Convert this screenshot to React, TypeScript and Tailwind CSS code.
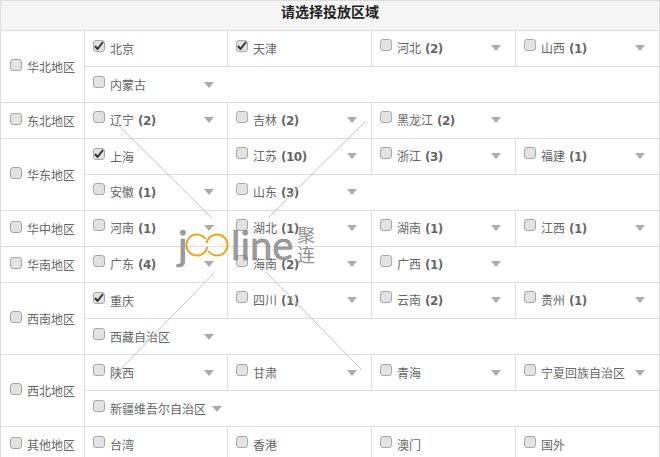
const regions: { name: string; rows: { name: string; count?: number; checked?: boolean; arrow?: boolean }[][] }[] = [
  {
    name: "华北地区",
    rows: [
      [{ name: "北京", checked: true }, { name: "天津", checked: true }, { name: "河北", count: 2, arrow: true }, { name: "山西", count: 1, arrow: true }],
      [{ name: "内蒙古", arrow: true }],
    ],
  },
  {
    name: "东北地区",
    rows: [[{ name: "辽宁", count: 2, arrow: true }, { name: "吉林", count: 2, arrow: true }, { name: "黑龙江", count: 2, arrow: true }]],
  },
  {
    name: "华东地区",
    rows: [
      [{ name: "上海", checked: true }, { name: "江苏", count: 10, arrow: true }, { name: "浙江", count: 3, arrow: true }, { name: "福建", count: 1, arrow: true }],
      [{ name: "安徽", count: 1, arrow: true }, { name: "山东", count: 3, arrow: true }],
    ],
  },
  {
    name: "华中地区",
    rows: [[{ name: "河南", count: 1, arrow: true }, { name: "湖北", count: 1, arrow: true }, { name: "湖南", count: 1, arrow: true }, { name: "江西", count: 1, arrow: true }]],
  },
  {
    name: "华南地区",
    rows: [[{ name: "广东", count: 4, arrow: true }, { name: "海南", count: 2, arrow: true }, { name: "广西", count: 1, arrow: true }]],
  },
  {
    name: "西南地区",
    rows: [
      [{ name: "重庆", checked: true }, { name: "四川", count: 1, arrow: true }, { name: "云南", count: 2, arrow: true }, { name: "贵州", count: 1, arrow: true }],
      [{ name: "西藏自治区", arrow: true }],
    ],
  },
  {
    name: "西北地区",
    rows: [
      [{ name: "陕西", arrow: true }, { name: "甘肃", arrow: true }, { name: "青海", arrow: true }, { name: "宁夏回族自治区", arrow: true }],
      [{ name: "新疆维吾尔自治区", arrow: true }],
    ],
  },
  {
    name: "其他地区",
    rows: [[{ name: "台湾" }, { name: "香港" }, { name: "澳门" }, { name: "国外" }]],
  },
];

function Check({ checked }: { checked?: boolean }) {
  return (
    <span className="flex h-[12px] w-[12px] shrink-0 items-center justify-center rounded-[3px] border border-[#a8a8a8] bg-[#e2e2e2]">
      {checked && (
        <svg width="10" height="9" viewBox="0 0 10 9">
          <path d="M1 5 L3.5 8 L9 1" fill="none" stroke="#333" strokeWidth="2" />
        </svg>
      )}
    </span>
  );
}

function Province({ name, count, checked, arrow }: { name: string; count?: number; checked?: boolean; arrow?: boolean }) {
  return (
    <div className="flex w-fit min-w-[129px] items-start justify-between gap-[6px] pl-[8px]">
      <div className="flex items-start gap-[5px]">
        <Check checked={checked} />
        <span className="whitespace-nowrap leading-[18px]">
          {name}
          {count !== undefined && <b className="ml-[4px] text-[12px] font-bold tracking-[-0.5px] [font-family:'DejaVu_Sans',sans-serif]">({count})</b>}
        </span>
      </div>
      {arrow && <span className="mt-[6px] h-0 w-0 shrink-0 border-x-[5.5px] border-t-[6px] border-x-transparent border-t-[#aaaaaa]" />}
    </div>
  );
}

function Watermark() {
  return (
    <div className="pointer-events-none absolute left-0 top-0 h-[457px] w-[660px]">
      <svg className="absolute left-0 top-0" width="660" height="457">
        <g stroke="#c4c4c4" strokeWidth="1">
          <line x1="118" y1="125" x2="212" y2="218" />
          <line x1="365" y1="122" x2="268" y2="218" />
          <line x1="214" y1="273" x2="112" y2="378" />
          <line x1="266" y1="272" x2="362" y2="370" />
        </g>
        <g fill="none" stroke="#f2a11c" strokeWidth="2">
          <path d="M205.6 239 A10.5 10.5 0 1 0 207.3 246.8" />
          <path d="M208.4 251 A10.5 10.5 0 1 0 206.7 243.2" />
        </g>
      </svg>
      <span className="absolute left-[178px] top-[217px] text-[40px] leading-[56px] text-[#8a8a8a]/85 [-webkit-text-stroke:0.6px_#8a8a8a] [font-family:'Lato',sans-serif]">j</span>
      <span className="absolute left-[231px] top-[217px] text-[40px] leading-[56px] text-[#8a8a8a]/85 [-webkit-text-stroke:0.6px_#8a8a8a] [font-family:'Lato',sans-serif]">line</span>
      <span className="absolute left-[297px] top-[224px] w-[18px] text-[18px] leading-[20px] text-[#8f8f8f]">聚连</span>
    </div>
  );
}

export default function App() {
  return (
    <div className="relative h-[457px] w-[660px] overflow-hidden bg-white text-[12px] text-[#666] [font-family:'Noto_Sans_CJK_SC','Open_Sans',sans-serif]">
      <table className="w-[660px] table-fixed border-collapse">
        <colgroup>
          <col className="w-[84px]" />
          <col className="w-[143px]" />
          <col className="w-[144px]" />
          <col className="w-[144px]" />
          <col className="w-[144px]" />
        </colgroup>
        <tbody>
          <tr className="h-[30px]">
            <th colSpan={5} className="border border-[#ddd] bg-[#f5f5f5] pb-[9px] text-center align-middle text-[14px] font-bold leading-[16px] text-[#222]">
              请选择投放区域
            </th>
          </tr>
          {regions.flatMap((region) =>
            region.rows.map((row, i) => (
              <tr key={region.name + i} className="h-[36px]">
                {i === 0 && (
                  <td rowSpan={region.rows.length} className="border border-[#ddd] pl-[9px]">
                    <div className="flex items-center gap-[5px]">
                      <div className="mt-[-3px]">
                        <Check />
                      </div>
                      <span className="whitespace-nowrap">{region.name}</span>
                    </div>
                  </td>
                )}
                {row.map((p, j) => (
                  <td
                    key={p.name}
                    colSpan={j === row.length - 1 ? 5 - row.length : 1}
                    className="border border-[#ddd] align-middle"
                  >
                    <Province {...p} />
                  </td>
                ))}
              </tr>
            )),
          )}
        </tbody>
      </table>
      <Watermark />
    </div>
  );
}
